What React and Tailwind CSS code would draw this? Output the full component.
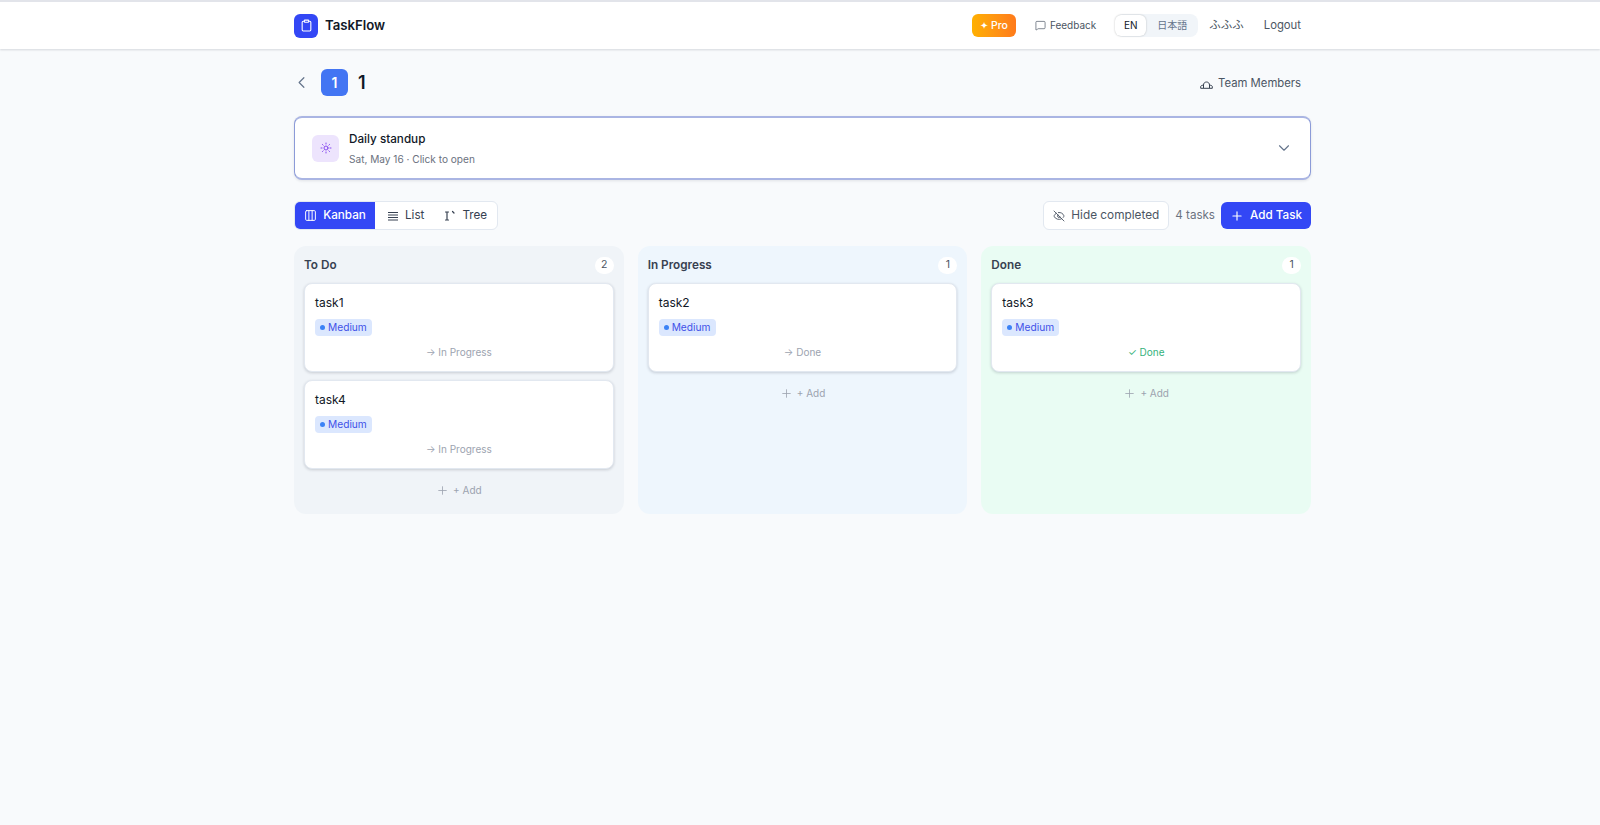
import { ChevronLeft, ChevronDown, Clipboard, MessageSquare, Columns3, EyeOff, Plus, Sun } from 'lucide-react'

const font = { fontFamily: 'Inter, "Noto Sans CJK JP", sans-serif' }

function TeamIcon() {
  return (
    <svg width="13" height="8" viewBox="0 0 13 8" fill="none" stroke="#374151" strokeWidth="1" className="mt-[3px]">
      <path d="M3.5 7V4C3.5 2.2 4.8 1 6.5 1S9.5 2.2 9.5 4V7" />
      <path d="M.7 7.3V5.6C.7 4.8 1.6 4.2 3.5 4.2M12.3 7.3V5.6c0-.8-.9-1.4-2.8-1.4M.7 7.3h11.6" />
    </svg>
  )
}

function TreeIcon() {
  return (
    <svg width="12" height="12" viewBox="0 0 12 12" fill="none" stroke="#374151" strokeWidth="1.2" strokeLinecap="round">
      <path d="M1.5 2h3M3 2v8M1.5 10h3" />
      <path d="M8.5 1.5l1.5 1.5" />
    </svg>
  )
}

function ListIcon() {
  return (
    <svg width="12" height="12" viewBox="0 0 12 12" fill="none" stroke="#374151" strokeWidth="1">
      <path d="M1 2.5h10M1 5h10M1 7.5h10M1 10h10" />
    </svg>
  )
}

function TaskCard({ title, action, done }) {
  return (
    <div className="flex h-[89px] flex-col rounded-lg border border-[#e2e8f0] bg-white px-[10px] pt-[9px] shadow-[0_1px_3px_rgba(15,23,42,0.18)]">
      <div className="text-[12px] leading-[20px] text-[#111827]">{title}</div>
      <div className="mt-[6px] flex h-[17px] w-[57px] items-center gap-[3px] rounded bg-[#dbe7fe] pl-[5px] text-[10.2px] text-[#3f51e8]">
        <span className="h-[5px] w-[5px] flex-none rounded-full bg-[#3b82f6]" />
        Medium
      </div>
      <div className={`mt-[8px] text-center text-[10px] leading-[16px] ${done ? 'text-[#34b27b]' : 'text-[#9ca3af]'}`}>{action}</div>
    </div>
  )
}

function Column({ title, count, bg, tasks }) {
  return (
    <div className={`h-[268px] flex-1 rounded-xl px-[10px] pt-[10px] ${bg}`}>
      <div className="flex h-[18px] items-center justify-between">
        <span className="pt-[2px] text-[11.75px] font-semibold text-[#374151]">{title}</span>
        <span className="flex h-[17px] w-[19px] items-center justify-center rounded-full bg-white text-[10.5px] text-[#4b5563]">{count}</span>
      </div>
      <div className="mt-[9px] flex flex-col gap-[8px]">
        {tasks.map((t) => (
          <TaskCard key={t.title} {...t} />
        ))}
      </div>
      <div className="mt-[13px] flex h-[16px] items-center justify-center gap-[4px] text-[10px] text-[#9ca3af]">
        <Plus size={13} strokeWidth={1.5} />
        + Add
      </div>
    </div>
  )
}

export default function App() {
  return (
    <div style={font} className="min-h-[825px] bg-[#f8fafc] pl-[5px]">
      <header className="-ml-[5px] border-t-2 border-t-[#e2e4ea] bg-white pl-[5px] shadow-[0_1px_2px_rgba(15,23,42,0.15)]">
        <div className="mx-auto flex h-[47px] w-[1017px] items-center">
          <div className="flex h-[24px] w-[24px] items-center justify-center rounded-md bg-[#3347f5] text-white">
            <Clipboard size={13} strokeWidth={2} />
          </div>
          <span className="ml-[7px] text-[13.2px] font-semibold text-[#111827]">TaskFlow</span>
          <div className="ml-auto flex h-[23px] w-[44px] items-center justify-center gap-[3px] rounded-md bg-gradient-to-r from-[#ffb000] to-[#ff7a1a] text-[10.5px] font-medium text-white">
            <span className="text-[10px]">✦</span>Pro
          </div>
          <div className="ml-[19px] flex items-center gap-[4px] text-[10px] text-[#4b5563]">
            <MessageSquare size={11} strokeWidth={1.5} />
            Feedback
          </div>
          <div className="ml-[19px] flex h-[23px] w-[83px] items-center rounded-lg bg-[#f1f5f9] text-[10px]">
            <span className="flex h-[21px] w-[31px] items-center justify-center rounded-md bg-white text-[#111827] shadow-[0_0_2px_rgba(0,0,0,0.25)]">EN</span>
            <span className="flex-1 text-center text-[#64748b]">日本語</span>
          </div>
          <span className="ml-[11px] text-[11.5px] text-[#4b5563]">ふふふ</span>
          <span className="ml-[20px] mr-[10px] text-[11.3px] text-[#4b5563]">Logout</span>
        </div>
      </header>

      <main className="mx-auto w-[1017px]">
        <div className="flex h-[67px] items-center">
          <ChevronLeft size={19} strokeWidth={1.5} className="ml-[-2px] text-[#64748b]" />
          <div className="ml-[10px] flex h-[27px] w-[27px] items-center justify-center rounded-md bg-[#4375f3] text-[14px] font-semibold text-white">1</div>
          <span className="ml-[10px] text-[18px] font-semibold text-[#111827]">1</span>
          <div className="ml-auto mr-[10px] flex items-center gap-[5px] pt-[2px] text-[11.3px] text-[#4b5563]">
            <TeamIcon />
            Team Members
          </div>
        </div>

        <div className="flex h-[64px] items-center rounded-lg border-x border-y-2 border-x-[#8c9bd8] border-y-[#aab5e3] bg-white pl-[17px] pr-[17px] shadow-[0_1px_3px_rgba(15,23,42,0.1)]">
          <div className="flex h-[27px] w-[27px] items-center justify-center rounded-md bg-[#ede4fd] text-[#7c3aed]">
            <Sun size={12} strokeWidth={1.8} />
          </div>
          <div className="ml-[10px] pb-[1px]">
            <div className="text-[11.7px] font-medium leading-[18px] text-[#111827]">Daily standup</div>
            <div className="mt-[4px] text-[10.1px] leading-[14px] text-[#6b7280]">Sat, May 16 · Click to open</div>
          </div>
          <ChevronDown size={18} strokeWidth={1.5} className="ml-auto text-[#64748b]" />
        </div>

        <div className="mt-[21px] flex h-[29px] items-center">
          <div className="flex h-[29px] items-center overflow-hidden rounded-md border border-[#e2e8f0] bg-white text-[11.7px] text-[#374151]">
            <div className="flex h-full w-[80px] items-center justify-center gap-[6px] bg-[#3347f5] font-medium text-white">
              <Columns3 size={13} strokeWidth={1.8} />
              Kanban
            </div>
            <div className="flex h-full items-center gap-[6px] pl-[12px] pr-[11px]">
              <ListIcon />
              List
            </div>
            <div className="flex h-full items-center gap-[6px] pl-[9px] pr-[10px]">
              <TreeIcon />
              Tree
            </div>
          </div>
          <div className="ml-auto flex h-[29px] w-[126px] items-center justify-center gap-[6px] rounded-md border border-[#e2e8f0] bg-white text-[11.8px] text-[#4b5563]">
            <EyeOff size={12} strokeWidth={1.8} />
            Hide completed
          </div>
          <span className="ml-[6px] text-[11.6px] text-[#6b7280]">4 tasks</span>
          <div className="ml-[6px] flex h-[27px] w-[90px] items-center justify-center gap-[6px] rounded-md bg-[#3347f5] text-[11.7px] font-medium text-white">
            <Plus size={14} strokeWidth={2} />
            Add Task
          </div>
        </div>

        <div className="mt-[16px] flex gap-[14px]">
          <Column title="To Do" count={2} bg="bg-[#f0f4f8]" tasks={[{ title: 'task1', action: '→ In Progress' }, { title: 'task4', action: '→ In Progress' }]} />
          <Column title="In Progress" count={1} bg="bg-[#eef6fd]" tasks={[{ title: 'task2', action: '→ Done' }]} />
          <Column title="Done" count={1} bg="bg-[#e9fcf3]" tasks={[{ title: 'task3', action: '✓ Done', done: true }]} />
        </div>
      </main>
    </div>
  )
}
